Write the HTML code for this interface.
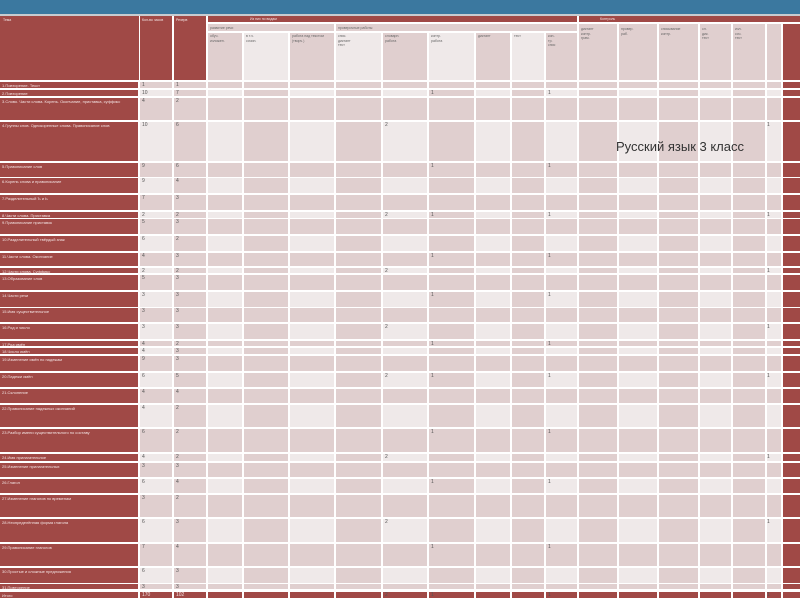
<!DOCTYPE html>
<html><head><meta charset="utf-8"><style>
*{margin:0;padding:0;box-sizing:border-box}
body{width:800px;height:600px;overflow:hidden;background:#fff;position:relative;font-family:"Liberation Sans","DejaVu Sans",sans-serif}
.c{position:absolute}
.t{position:absolute;font-size:4px;line-height:5px;color:#f3e3e3;white-space:nowrap;overflow:hidden}
.n{position:absolute;font-size:5px;line-height:5px;color:#555}
.h{position:absolute;font-size:3.5px;line-height:4.5px;color:#666}
</style></head><body>
<div class="c" style="left:0;top:0;width:800px;height:14px;background:#3b789f"></div>
<div class="c" style="left:0;top:14px;width:800px;height:2px;background:#c8ccd0"></div>
<div id="g"></div>
<div class="h" style="left:3px;top:18px;color:#f3e3e3">Тема</div>
<div class="h" style="left:142px;top:18px;color:#f3e3e3">Кол-во часов</div>
<div class="h" style="left:176px;top:18px;color:#f3e3e3">Резерв</div>
<div class="h" style="left:250px;top:17px;color:#f3e3e3">Из них по видам</div>
<div class="h" style="left:600px;top:17px;color:#f3e3e3">Контроль</div>
<div class="h" style="left:210px;top:26px">развитие речи</div>
<div class="h" style="left:338px;top:26px">проверочные работы</div>
<div class="h" style="left:210px;top:34px">обуч.<br>изложен.</div>
<div class="h" style="left:246px;top:34px">в т.ч.<br>сочин.</div>
<div class="h" style="left:292px;top:34px">работа над текстом<br>(творч.)</div>
<div class="h" style="left:338px;top:34px">спис.<br>диктант<br>тест</div>
<div class="h" style="left:385px;top:34px">словарн.<br>работа</div>
<div class="h" style="left:431px;top:34px">контр.<br>работа</div>
<div class="h" style="left:478px;top:34px">диктант</div>
<div class="h" style="left:514px;top:34px">тест</div>
<div class="h" style="left:548px;top:34px">кон-<br>тр.<br>спис</div>
<div class="h" style="left:581px;top:27px">диктант<br>контр.<br>грам.</div>
<div class="h" style="left:621px;top:27px">провер.<br>раб.</div>
<div class="h" style="left:661px;top:27px">списывание<br>контр.</div>
<div class="h" style="left:702px;top:27px">сл.<br>дик.<br>тест</div>
<div class="h" style="left:735px;top:27px">изл.<br>соч.<br>тест</div>
<div class="c" style="left:616px;top:139px;font-size:13px;color:#333;white-space:nowrap">Русский язык 3 класс</div>
<div id="tx"></div>
<script>
var L=[0,140,174,208,244,290,336,383,429,476,512,546,579,619,659,700,733,767,783,802];
var R=[[82,88],[90,96],[98,120],[122,161],[163,177],[178,193],[195,210],[212,218],[219,234],[236,251],[253,266],[268,273],[275,290],[292,307],[308,322],[324,339],[341,346],[348,354],[356,371],[373,387],[389,403],[405,427],[429,452],[454,461],[463,477],[479,493],[495,517],[519,542],[544,566],[568,583],[584,589],[592,598]];
var RED="#a04946",D="#e0cfcf",LI="#efe9e9";
var h="";
function box(x,y,w,hh,c){h+='<div class="c" style="left:'+x+'px;top:'+y+'px;width:'+w+'px;height:'+hh+'px;background:'+c+'"></div>';}
// header
box(0,16,139,64,RED);box(140,16,32,64,RED);box(174,16,32,64,RED);
box(208,16,369,6,RED);box(579,16,221,6,RED);
box(208,24,126,7,D);box(336,24,241,7,D);
for(var i=3;i<12;i++){box(L[i],33,L[i+1]-L[i]-2,47,(i%2==1)?D:LI);}
for(var i=12;i<18;i++){box(L[i],24,L[i+1]-L[i]-2,56,D);}
box(783,24,17,56,RED);
for(var r=0;r<R.length;r++){
 var y=R[r][0],hh=R[r][1]-R[r][0];
 for(var i=0;i<19;i++){
  var w=L[i+1]-L[i]-2,c;
  if(i==0||i==18||r==R.length-1)c=RED;
  else if(r%2==1)c=((i+r)%2==0)?LI:D;
  else c=D;
  box(L[i],y,w,hh,c);
 }
}
document.getElementById('g').innerHTML=h;
var lab=["1.Повторение. Текст","2.Повторение","3.Слово. Части слова. Корень. Окончание, приставка, суффикс","4.Группы слов. Однокоренные слова. Правописание слов","5.Правописание слов","6.Корень слова и правописание","7.Разделительный Ъ и Ь","8.Части слова. Приставка","9.Правописание приставок","10.Разделительный твёрдый знак","11.Части слова. Окончание","12.Части слова. Суффикс","13.Образование слов","14.Части речи","15.Имя существительное","16.Род и число","17.Род имён","18.Число имён","19.Изменение имён по падежам","20.Падежи имён","21.Склонение","22.Правописание падежных окончаний","23.Разбор имени существительного по составу","24.Имя прилагательное","25.Изменение прилагательных","26.Глагол","27.Изменение глаголов по временам","28.Неопределённая форма глагола","29.Правописание глаголов","30.Простые и сложные предложения","31.Повторение","Итого"];
var nums=[["1","1"],["10","7"],["4","2"],["10","6"],["9","6"],["9","4"],["7","3"],["2","2"],["5","3"],["6","2"],["4","3"],["2","2"],["5","3"],["3","3"],["3","3"],["3","3"],["4","2"],["4","3"],["9","3"],["6","5"],["4","4"],["4","2"],["6","2"],["4","2"],["3","3"],["6","4"],["3","2"],["6","3"],["7","4"],["6","3"],["3","3"],["170","102"]];
var t="";
for(var r=0;r<R.length;r++){var y=R[r][0]+1;
 t+='<div class="t" style="left:2px;top:'+y+'px;width:135px">'+lab[r]+'</div>';
 var col=r==R.length-1?"#f3e3e3":"#555";
 t+='<div class="n" style="left:142px;top:'+y+'px;color:'+col+'">'+nums[r][0]+'</div>';
 t+='<div class="n" style="left:176px;top:'+y+'px;color:'+col+'">'+nums[r][1]+'</div>';
 if(r%3==1)t+='<div class="n" style="left:431px;top:'+y+'px">1</div><div class="n" style="left:548px;top:'+y+'px">1</div>';
 if(r%4==3)t+='<div class="n" style="left:385px;top:'+y+'px">2</div><div class="n" style="left:767px;top:'+y+'px">1</div>';
}
document.getElementById('tx').innerHTML=t;
</script>
</body></html>
